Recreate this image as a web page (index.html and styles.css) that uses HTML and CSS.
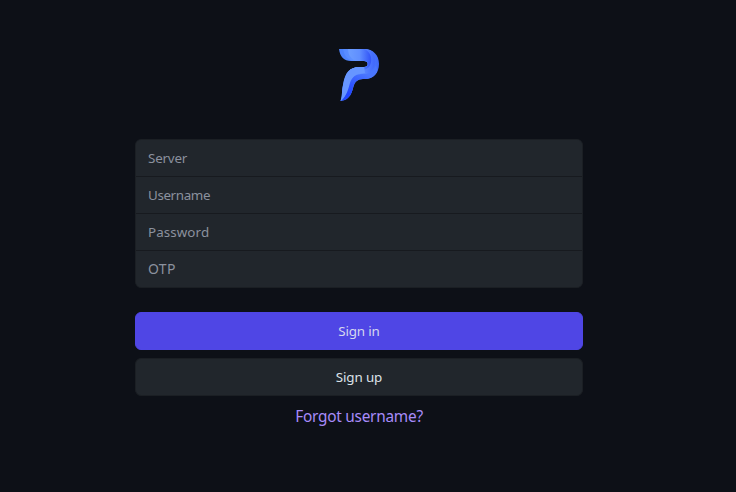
FILE: index.html
```html
<!DOCTYPE html>
<html lang="en">
<head>
<meta charset="utf-8">
<title>Sign in</title>
<link rel="stylesheet" href="styles.css">
</head>
<body>
<main class="login">
  <svg class="logo" viewBox="0 0 42 54" width="42" height="54" aria-hidden="true">
    <defs>
      <linearGradient id="body" x1="5" y1="0" x2="41" y2="0" gradientUnits="userSpaceOnUse">
        <stop offset="0" stop-color="#4c82fb"/>
        <stop offset=".5" stop-color="#5b8eff"/>
        <stop offset="1" stop-color="#3f68f8"/>
      </linearGradient>
      <linearGradient id="band" x1="6" y1="0" x2="36" y2="0" gradientUnits="userSpaceOnUse">
        <stop offset="0" stop-color="#568bff"/>
        <stop offset=".5" stop-color="#6696ff"/>
        <stop offset="1" stop-color="#426afc"/>
      </linearGradient>
      <linearGradient id="inner" x1="11" y1="0" x2="32" y2="0" gradientUnits="userSpaceOnUse">
        <stop offset="0" stop-color="#6b9cff"/>
        <stop offset=".5" stop-color="#608fff"/>
        <stop offset="1" stop-color="#3558f8"/>
      </linearGradient>
      <linearGradient id="stem" x1="14" y1="48" x2="25" y2="25" gradientUnits="userSpaceOnUse">
        <stop offset="0" stop-color="#2246ff"/>
        <stop offset=".4" stop-color="#2f55ff"/>
        <stop offset="1" stop-color="#4a76fd"/>
      </linearGradient>
      <clipPath id="shape">
        <path d="M1 1H26C35 1 41 7 41 16C41 25 35 31 27 31C21 31 18 32 16 37C14 43 13 52 2.500 53C4.500 48 3.500 43 5 37C7 25 11 19 22 19H26C31 19 31 13 26 13H13C6 13 2 9 1 1Z"/>
      </clipPath>
    </defs>
    <g clip-path="url(#shape)">
      <path fill="url(#body)" d="M0 0H42V54H0Z"/>
      <path fill="url(#band)" d="M5 0H27C34 1 38 7 37 15C36 23 30 27 22 27L8 20L17 13C9 12 6 8 5 0Z"/>
      <path fill="url(#inner)" d="M10 0H24C31 2 34 8 33 14C32 20 28 22 23 22L15 19L20 13C13 12 10 7 10 0Z"/>
      <path fill="url(#stem)" d="M3 53C10 46 9 37 13 31C17 26 22 26 28 26C34 25 37 20 38 17L41 31H27L16 37L13 54Z"/>
      <path fill="#6796ff" d="M2 53C5 46 3 41 5 35C7 25 11 18 20 18H26L27 25C18 25 14 29 12 35C10 42 9 47 3 53Z"/>
    </g>
  </svg>
  <form class="form">
    <div class="fields">
      <input class="field server" type="text" placeholder="Server" aria-label="Server">
      <input class="field username" type="text" placeholder="Username" aria-label="Username">
      <input class="field password" type="password" placeholder="Password" aria-label="Password">
      <input class="field otp" type="text" placeholder="OTP" aria-label="OTP">
    </div>
    <div class="actions">
      <button class="button primary" type="button">Sign in</button>
      <button class="button secondary" type="button">Sign up</button>
    </div>
  </form>
  <a class="forgot" href="#">Forgot username?</a>
</main>
</body>
</html>
```

FILE: styles.css
```css
* {
  box-sizing: border-box;
}

body {
  margin: 0;
  min-height: 492px;
  background: #0d1017;
  font-family: "Noto Sans", sans-serif;
  overflow: hidden;
}

.login {
  width: 448px;
  margin-left: 135px;
  padding-top: 48px;
  display: flex;
  flex-direction: column;
  align-items: center;
}

.logo {
  display: block;
  margin-bottom: 37px;
}

.form {
  width: 100%;
}

.fields {
  display: flex;
  flex-direction: column;
  overflow: hidden;
  border: 1px solid #1b1f24;
  border-radius: 6px;
  background: #21262d;
}

.field {
  width: 100%;
  height: 36px;
  padding: 0 12px 1px;
  border: 0;
  outline: 0;
  background: #21262c;
  color: #c9d1d9;
  font: 13.4px/20px "Noto Sans", sans-serif;
}

.field + .field {
  height: 37px;
  border-top: 1px solid #171a1f;
}

.field::placeholder {
  color: #8b919e;
  opacity: 1;
}

.server {
  letter-spacing: -0.2px;
}

.username {
  letter-spacing: -0.38px;
}

.password {
  letter-spacing: 0.08px;
}

.otp {
  font-size: 14px;
  letter-spacing: 0.3px;
}

.actions {
  display: grid;
  gap: 8px;
  margin-top: 24px;
}

.button {
  height: 38px;
  padding: 0;
  border: 1px solid #1b1f24;
  border-radius: 6px;
  font: 13.4px/20px "Noto Sans", sans-serif;
  letter-spacing: -0.15px;
}

.primary {
  border-color: #4f46e5;
  background: #4f46e5;
  color: #d5d8ee;
}

.secondary {
  background: #21262c;
  color: #dce2e8;
}

.forgot {
  margin-top: 9px;
  color: #a78bfa;
  font-size: 15.4px;
  line-height: 24px;
  letter-spacing: -0.25px;
  text-decoration: none;
}
```
